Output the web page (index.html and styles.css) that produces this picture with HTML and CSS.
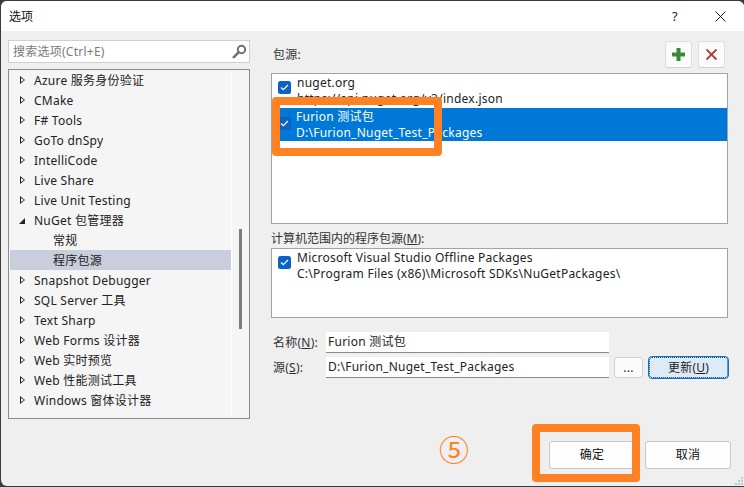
FILE: index.html
```html
<!DOCTYPE html>
<html lang="zh-CN">
<head>
<meta charset="utf-8">
<title>选项</title>
<link rel="stylesheet" href="styles.css">
</head>
<body>
<div class="window">
  <header class="titlebar">
    <span class="title">选项</span>
    <span class="help">?</span>
    <svg class="close" width="11" height="11" viewBox="0 0 11 11"><path d="M.5.5l10 10M10.5.5l-10 10" stroke="#1a1a1a" stroke-width="1" fill="none"/></svg>
  </header>
  <main class="content">
    <section class="left">
      <div class="search">
        <span class="placeholder">搜索选项(Ctrl+E)</span>
        <svg class="search-icon" width="15" height="15" viewBox="0 0 15 15"><circle cx="9.5" cy="5.5" r="3.7" fill="none" stroke="#6f6f6f" stroke-width="2"/><path d="M6.6 8.4L1.8 13.2" stroke="#6f6f6f" stroke-width="2.6" stroke-linecap="round"/></svg>
      </div>
      <div class="tree">
        <ul class="tree-list">
          <li class="row"><i class="arrow"></i>Azure 服务身份验证</li>
          <li class="row"><i class="arrow"></i>CMake</li>
          <li class="row"><i class="arrow"></i>F# Tools</li>
          <li class="row"><i class="arrow"></i>GoTo dnSpy</li>
          <li class="row"><i class="arrow"></i>IntelliCode</li>
          <li class="row"><i class="arrow"></i>Live Share</li>
          <li class="row"><i class="arrow"></i>Live Unit Testing</li>
          <li class="row"><i class="arrow open"></i>NuGet 包管理器</li>
          <li class="row child">常规</li>
          <li class="row child selected">程序包源</li>
          <li class="row"><i class="arrow"></i>Snapshot Debugger</li>
          <li class="row"><i class="arrow"></i>SQL Server 工具</li>
          <li class="row"><i class="arrow"></i>Text Sharp</li>
          <li class="row"><i class="arrow"></i>Web Forms 设计器</li>
          <li class="row"><i class="arrow"></i>Web 实时预览</li>
          <li class="row"><i class="arrow"></i>Web 性能测试工具</li>
          <li class="row"><i class="arrow"></i>Windows 窗体设计器</li>
        </ul>
        <div class="scrolltrack"><div class="thumb"></div></div>
      </div>
    </section>
    <section class="right">
      <div class="sources-head">
        <span class="sources-label">包源:</span>
        <div class="tools">
          <button class="tool"><svg width="15" height="15" viewBox="0 0 15 15"><path d="M7.5 1v13M1 7.5h13" stroke="#388a34" stroke-width="4"/></svg></button>
          <button class="tool"><svg width="13" height="13" viewBox="0 0 13 13"><path d="M1.5 1.5l10 10M11.5 1.5l-10 10" stroke="#a5443a" stroke-width="1.8"/></svg></button>
        </div>
      </div>
      <div class="list list-main">
        <div class="item">
          <span class="check"><svg width="9" height="7" viewBox="0 0 9 7"><path d="M1 3.5l2.3 2.2L8 1" stroke="#fff" stroke-width="1.2" fill="none"/></svg></span>
          <div class="lines"><div>nuget.org</div><div>https://api.nuget.org/v3/index.json</div></div>
        </div>
        <div class="item active">
          <span class="check"><svg width="9" height="7" viewBox="0 0 9 7"><path d="M1 3.5l2.3 2.2L8 1" stroke="#fff" stroke-width="1.2" fill="none"/></svg></span>
          <div class="lines"><div>Furion 测试包</div><div>D:\Furion_Nuget_Test_Packages</div></div>
        </div>
      </div>
      <div class="machine-label">计算机范围内的程序包源(<u>M</u>):</div>
      <div class="list list-machine">
        <div class="item">
          <span class="check"><svg width="9" height="7" viewBox="0 0 9 7"><path d="M1 3.5l2.3 2.2L8 1" stroke="#fff" stroke-width="1.2" fill="none"/></svg></span>
          <div class="lines"><div>Microsoft Visual Studio Offline Packages</div><div>C:\Program Files (x86)\Microsoft SDKs\NuGetPackages\</div></div>
        </div>
      </div>
      <div class="form-row row-name">
        <label class="field-label">名称(<u>N</u>):</label>
        <div class="input">Furion 测试包</div>
      </div>
      <div class="form-row row-src">
        <label class="field-label">源(<u>S</u>):</label>
        <div class="input">D:\Furion_Nuget_Test_Packages</div>
        <button class="btn dots">...</button>
        <button class="btn update">更新(<u>U</u>)</button>
      </div>
    </section>
  </main>
  <footer class="footer">
    <button class="btn action ok">确定</button>
    <button class="btn action">取消</button>
  </footer>
  <svg class="grip" width="8" height="8" viewBox="0 0 8 8"><path d="M6 0h2v2H6zM3 3h2v2H3zM6 3h2v2H6zM0 6h2v2H0zM3 6h2v2H3zM6 6h2v2H6z" fill="#c4c4c4"/></svg>
</div>
<div class="mark mark-list"></div>
<div class="mark mark-ok"></div>
<div class="step">⑤</div>
</body>
</html>
```

FILE: styles.css
```css
* { box-sizing: border-box; }
html, body { margin: 0; padding: 0; }
body {
  width: 744px; height: 487px; overflow: hidden; position: relative;
  background: #3a3a3a;
  font: 12px/16px "Noto Sans", "Noto Sans CJK SC", sans-serif;
  letter-spacing: .25px;
  color: #1e1e1e;
}
ul { margin: 0; padding: 0; list-style: none; }
button { font: inherit; letter-spacing: inherit; color: inherit; padding: 0; margin: 0; }

.window {
  position: relative;
  margin: 1px 0 0 1px;
  width: 743px; height: 485px;
  background: #efefef;
  border-radius: 6px 6px 0 6px;
  overflow: hidden;
  display: flex; flex-direction: column;
}
.titlebar {
  height: 30px; flex: none; background: #fff;
  display: flex; align-items: center; padding: 0 18px 0 8px;
}
.title { margin-top: 1px; color: #111; letter-spacing: 0; }
.help { margin-left: auto; margin-right: 37px; font-size: 13px; color: #222; }
.close { display: block; }

.content { flex: none; height: 387px; display: flex; }
.left { width: 242px; margin-left: 7px; flex: none; }
.search {
  height: 23px; margin-top: 9px;
  background: #fff; border: 1px solid #ccceDF;
  display: flex; align-items: center; justify-content: space-between;
  padding: 0 2px 0 4px;
}
.placeholder { color: #7a7a7a; }
.search-icon { display: block; }

.tree {
  height: 350px; margin-top: 6px;
  background: #f5f5f5; border: 1px solid #8c8c8e;
  display: flex; overflow: hidden;
}
.tree-list { width: 222px; flex: none; margin-left: 1px; border-right: 1px solid #fff; }
.row {
  height: 20px; line-height: 22px; padding-left: 24px;
  position: relative; white-space: nowrap; color: #222;
}
.row.child { padding-left: 43px; }
.row.selected { background: #cacddb; }
.arrow {
  position: absolute; left: 10px; top: 6px; width: 0; height: 0;
  border-left: 5px solid #222; border-top: 4px solid transparent; border-bottom: 4px solid transparent;
}
.arrow::after {
  content: ""; position: absolute; left: -4px; top: -2px; width: 0; height: 0;
  border-left: 3px solid #f5f5f5; border-top: 2px solid transparent; border-bottom: 2px solid transparent;
}
.arrow.open {
  left: 9px; top: 8px;
  border: 0; border-right: 6px solid #222; border-top: 6px solid transparent;
}
.arrow.open::after { display: none; }
.scrolltrack { flex: 1; position: relative; }
.thumb { position: absolute; left: 7px; top: 159px; width: 3px; height: 100px; background: #7d7d7d; }

.right { width: 457px; margin-left: 21px; flex: none; }
.sources-head { height: 42px; display: flex; justify-content: space-between; padding: 10px 3px 0 2px; }
.sources-label { margin-top: 6px; color: #333; }
.tools { display: flex; gap: 6px; }
.tool {
  width: 27px; height: 27px; background: #fbfbfb;
  border: 1px solid #dedede; border-bottom-color: #cfcfcf; border-radius: 3px;
  display: flex; align-items: center; justify-content: center;
}
.list { background: #fff; border: 1px solid #a3a3a3; }
.list-main { height: 151px; }
.list-machine { height: 70px; }
.item { display: flex; height: 35px; padding-left: 6px; }
.list-main .item:first-child { height: 34px; }
.check {
  width: 13px; height: 13px; margin-top: 7px; border-radius: 2.5px;
  background: #0a63c4; display: flex; align-items: center; justify-content: center; flex: none;
}
.lines { margin-left: 6px; margin-top: 1px; line-height: 16px; white-space: nowrap; color: #222; }
.item.active { background: #0078d7; color: #fff; height: 33px; }
.item.active .lines { color: #fff; margin-top: 1px; margin-left: 5px; }
.item.active .check { background: #0a63c4; margin-top: 9px; }
.machine-label { height: 24px; margin-top: 0; padding: 6px 0 0; line-height: 18px; color: #333; letter-spacing: 0; }
.form-row { display: flex; height: 21px; align-items: stretch; }
.row-name { margin-top: 14px; }
.row-src { margin-top: 4px; }
.field-label { width: 55px; padding-left: 2px; line-height: 21px; color: #333; flex: none; }
.input {
  width: 283px; background: #fff; border-bottom: 1px solid #8a8a8a;
  padding-left: 2px; line-height: 20px; white-space: nowrap; color: #222;
}
.btn {
  background: #fbfbfb; border: 1px solid #d0d0d0; border-radius: 3px;
  display: flex; align-items: center; justify-content: center;
}
.dots { width: 29px; margin-left: 5px; }
.update {
  width: 79px; margin-left: 6px; background: #dcebf7;
  border: 1px dotted #333; outline: 1px solid #0078d7; outline-offset: 0;
}
.footer { flex: 1; display: flex; justify-content: flex-end; gap: 10px; padding: 23px 13px 0 0; }
.action { width: 86px; height: 28px; background: #fdfdfd; border-color: #c8c8c8; color: #111; }
.grip { position: absolute; right: 1px; bottom: 1px; }

.mark { position: absolute; border: 8px solid #ff8124; border-radius: 4px; }
.mark-list { left: 272px; top: 97px; width: 170px; height: 59px; }
.mark-ok { left: 532px; top: 424px; width: 108px; height: 58px; }
.step { position: absolute; left: 439px; top: 435px; font-size: 30px; line-height: 30px; letter-spacing: 0; color: #ff8124; }
```
